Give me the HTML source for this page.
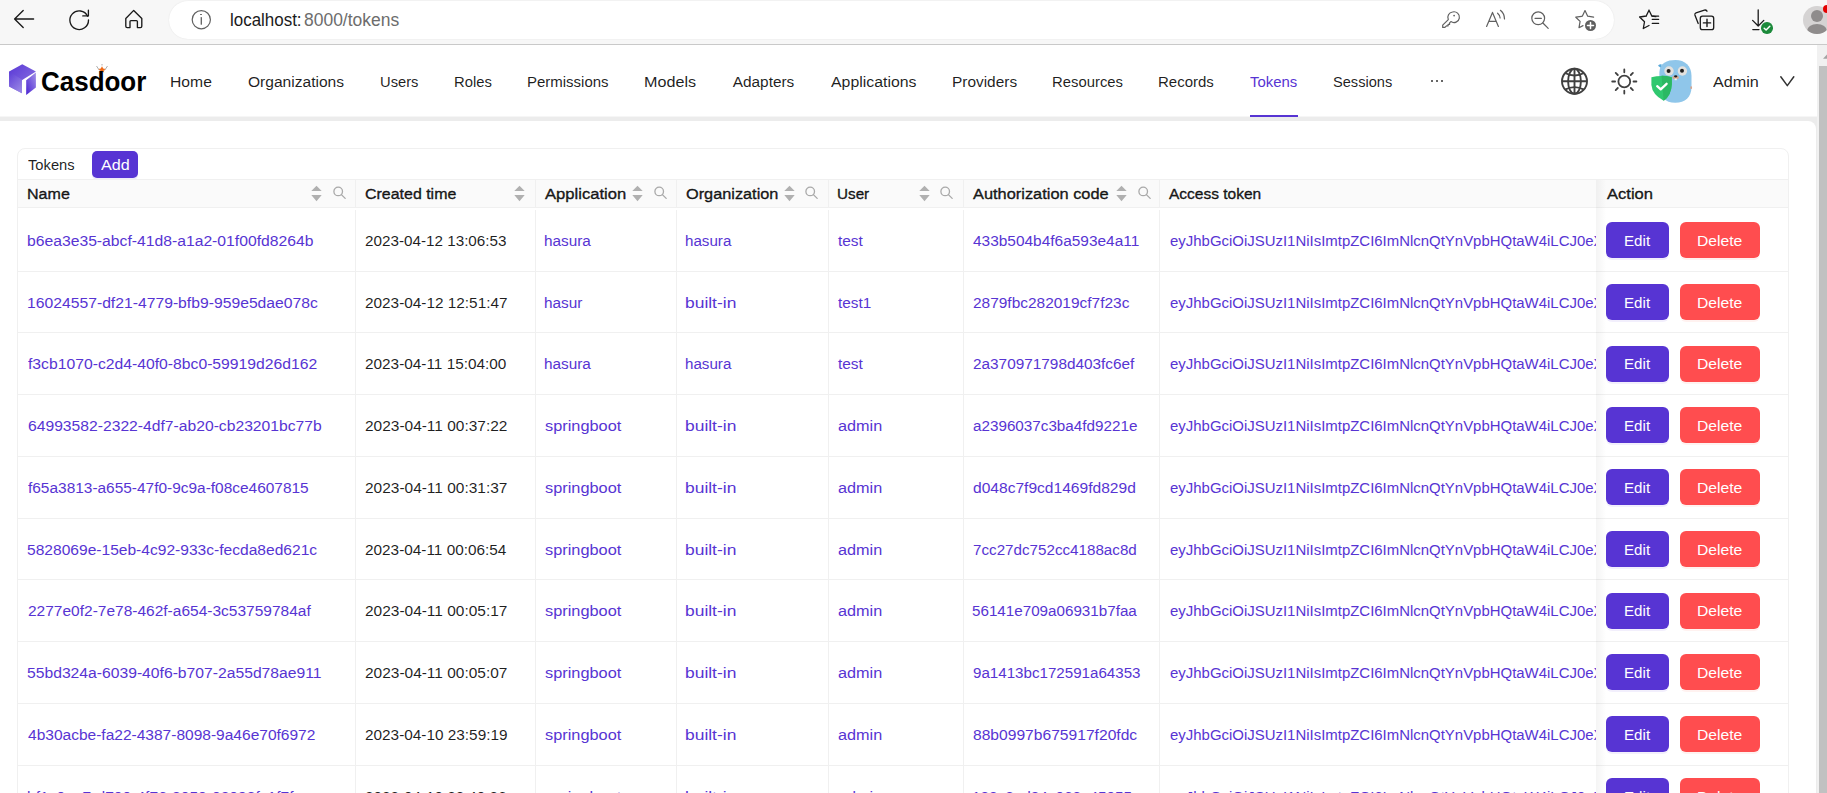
<!DOCTYPE html>
<html><head><meta charset="utf-8"><title>Tokens - Casdoor</title>
<style>
html,body{margin:0;padding:0;width:1827px;height:793px;overflow:hidden;background:#fff;font-family:"Liberation Sans", sans-serif}
.t{position:absolute;white-space:nowrap;line-height:20px;transform-origin:0 0}
</style></head><body>
<div style="position:absolute;left:0;top:0;width:1827px;height:44px;background:#f7f7f7"></div>
<div style="position:absolute;left:0;top:44px;width:1827px;height:1px;background:#c9c9c9"></div>
<div style="position:absolute;left:169px;top:1px;width:1445px;height:37.5px;border-radius:19px;background:#fff;box-shadow:0 0 1.5px rgba(0,0,0,0.10)"></div>
<svg style="position:absolute;left:0;top:0" width="240" height="44" viewBox="0 0 240 44" fill="none" stroke="#1a1a1a" stroke-width="1.35" stroke-linecap="round" stroke-linejoin="round">
<path d="M14.6 19 H33.6 M14.6 19 L23.2 10.4 M14.6 19 L23.2 27.6"/>
<path d="M87.6 16.2 A9.3 9.3 0 1 0 88.5 20"/>
<path d="M88.4 10.2 V15.9 H82.8"/>
<path d="M125.8 18.5 L133.7 10.4 L141.8 18.5 V26.2 Q141.8 27.6 140.4 27.6 H137.4 V21.6 Q137.4 20.6 136.4 20.6 H131 Q130 20.6 130 21.6 V27.6 H127.2 Q125.8 27.6 125.8 26.2 Z"/>
<circle cx="201.3" cy="19.7" r="9.1" stroke="#606060" stroke-width="1.2"/>
<path d="M201.3 17.6 V24.2" stroke="#606060" stroke-width="1.3"/>
</svg>
<div style="position:absolute;left:200.4px;top:13.6px;width:1.8px;height:1.8px;border-radius:50%;background:#606060"></div>
<svg style="position:absolute;left:1420px;top:0" width="407" height="44" viewBox="1420 0 407 44" fill="none" stroke="#606060" stroke-width="1.2" stroke-linecap="round" stroke-linejoin="round">
<path d="M1452.5 12 a5.4 5.4 0 1 1 -1.6 9.6 l-1.3 1.3 v1.4 h-1.5 v1.5 h-1.6 l-1.6 1.6 h-2.2 v-2.2 l5.6 -5.6 a5.4 5.4 0 0 1 4.2 -7.6 z"/>
<circle cx="1454.1" cy="15.6" r="0.9" fill="#606060" stroke="none"/>
<path d="M1486.6 26.4 L1492.5 12.4 L1498.4 26.4 M1488.7 21.4 H1496.3"/>
<path d="M1497.6 13.2 q2.4 2 2.5 4.8 M1500.4 10.3 q4 3.2 4.1 8.6"/>
<circle cx="1538.2" cy="18.3" r="6.4"/>
<path d="M1535 18.3 H1541.4 M1542.9 23 L1548.2 28.3"/>
<path d="M1585 10.6 l2.7 5.6 l5.9 0.9 M1581.6 16.3 l-5.8 0.9 l4.3 4.2 l-1.1 6.3 l4 -2.1 M1585 10.6 l-2.7 5.6"/>
</svg>
<div style="position:absolute;left:1585px;top:19.8px;width:11px;height:11px;border-radius:50%;background:#5f5f5f"></div>
<svg style="position:absolute;left:1585px;top:19.8px" width="11" height="11" viewBox="0 0 11 11" stroke="#fff" stroke-width="1.5" stroke-linecap="round"><path d="M5.5 2.5 V8.5 M2.5 5.5 H8.5"/></svg>
<svg style="position:absolute;left:1620px;top:0" width="207" height="44" viewBox="1620 0 207 44" fill="none" stroke="#1a1a1a" stroke-width="1.3" stroke-linecap="round" stroke-linejoin="round">
<path d="M1649 10.2 l2.8 5.8 l4 0.6 M1646.4 16 l-6.8 1 l4.9 4.8 l-1.2 6.7 l5.7 -3 M1649 10.2 l-2.8 5.8"/>
<path d="M1652.3 19.4 H1658.6 M1652.3 23.4 H1658.6 M1652.3 16.2 H1658.6"/>
<path d="M1698.2 23.5 L1694.9 15 Q1694.5 13.4 1696 12.8 L1704.4 10.1 Q1706 9.7 1707 11.2"/>
<rect x="1700.3" y="16.2" width="13.4" height="13.4" rx="2.2"/>
<path d="M1707 19.3 V26.5 M1703.4 22.9 H1710.6" stroke-width="1.4"/>
<path d="M1758.2 9.8 V26 M1752.6 20.4 L1758.2 26 L1763.8 20.4 M1752.8 29.6 H1759"/>
</svg>
<div style="position:absolute;left:1761.2px;top:22px;width:11.6px;height:11.6px;border-radius:50%;background:#1c8a3b"></div>
<svg style="position:absolute;left:1761.2px;top:22px" width="12" height="12" viewBox="0 0 12 12" fill="none" stroke="#fff" stroke-width="1.5" stroke-linecap="round" stroke-linejoin="round"><path d="M3.2 6.2 L5.1 8 L8.8 4.3"/></svg>
<div style="position:absolute;left:1803px;top:5.6px;width:28.4px;height:28.4px;border-radius:50%;background:#d5d3d3;overflow:hidden"><div style="position:absolute;left:7.8px;top:4.6px;width:12px;height:12px;border-radius:50%;background:#8f8c8c"></div><div style="position:absolute;left:4px;top:18px;width:20px;height:14px;border-radius:50%;background:#8f8c8c"></div></div>
<div style="position:absolute;left:1823px;top:5px;width:8px;height:8px;border-radius:50%;background:#e30000"></div>
<div style="position:absolute;left:0;top:45px;width:1817px;height:748px;background:#ececec"></div>
<div style="position:absolute;left:0;top:45px;width:1817px;height:71px;background:#fff"></div>
<div style="position:absolute;left:0;top:115.5px;width:1817px;height:1.5px;background:#f6f6f6"></div>
<div style="position:absolute;left:0;top:121px;width:1816px;height:700px;background:#fff;border-radius:0 8px 0 0"></div>
<div style="position:absolute;left:1817px;top:45px;width:10px;height:748px;background:#f1f1f1"></div>
<div style="position:absolute;left:1819px;top:66px;width:8px;height:727px;background:#c1c1c1"></div>
<svg style="position:absolute;left:1817px;top:45px" width="10" height="20" viewBox="0 0 10 20"><path d="M6 13.7 L10 9.6 L14 13.7 Z" fill="#a3a3a3"/></svg>
<svg style="position:absolute;left:0;top:55px" width="40" height="45" viewBox="0 55 40 45">
<defs>
<linearGradient id="gt" x1="0" y1="0" x2="1" y2="1"><stop offset="0" stop-color="#5a38d6"/><stop offset="1" stop-color="#8f79e2"/></linearGradient>
<linearGradient id="gl" x1="0" y1="0" x2="0.6" y2="1"><stop offset="0" stop-color="#5b3bd7"/><stop offset="1" stop-color="#9a88e4"/></linearGradient>
<linearGradient id="gr" x1="1" y1="0" x2="0" y2="1"><stop offset="0" stop-color="#a493e8"/><stop offset="1" stop-color="#4a23d2"/></linearGradient>
</defs>
<path d="M22.3 64.2 L35.9 71.4 L33.2 73.2 L24.6 78.6 L21.9 80.2 V93.2 L9.1 86.4 V71.6 Z" fill="url(#gt)"/>
<path d="M9.1 71.6 L21.9 79.6 V93.2 L9.1 86.4 Z" fill="url(#gl)" opacity="0.85"/>
<path d="M35.9 72.4 V87.6 L26.2 94.9 V80.2 Z" fill="url(#gr)"/>
</svg>
<svg style="position:absolute;left:94px;top:63px" width="16" height="10" viewBox="0 0 16 10"><path d="M2.5 3 L5.5 7.5 M13.5 3 L10.5 7.5 M8 1 V2.5" stroke="#9a9a9a" stroke-width="0.8" fill="none"/><path d="M8 3.2 L9.2 5.6 L11.6 5.9 L9.6 7.4 L10.2 9.6 L8 8.4 L5.8 9.6 L6.4 7.4 L4.4 5.9 L6.8 5.6 Z" fill="#f06a17"/></svg>
<div style="position:absolute;left:1430.6px;top:80px;width:2px;height:2px;background:#333;border-radius:1px"></div>
<div style="position:absolute;left:1435.6px;top:80px;width:2px;height:2px;background:#333;border-radius:1px"></div>
<div style="position:absolute;left:1440.6px;top:80px;width:2px;height:2px;background:#333;border-radius:1px"></div>
<div style="position:absolute;left:1250px;top:115px;width:47.5px;height:2px;background:#5734d3"></div>
<svg style="position:absolute;left:1555px;top:62px" width="40" height="40" viewBox="1555 62 40 40" fill="none" stroke="#404040" stroke-width="1.9">
<circle cx="1574.5" cy="81.3" r="12.5"/>
<ellipse cx="1574.5" cy="81.3" rx="6.4" ry="12.5"/>
<path d="M1574.5 68.8 V93.8 M1562 81.3 H1587"/>
<path d="M1565 73 Q1574.5 78 1584 73 M1565 89.6 Q1574.5 84.6 1584 89.6"/>
</svg>
<svg style="position:absolute;left:1605px;top:62px" width="40" height="40" viewBox="1605 62 40 40" fill="none" stroke="#404040" stroke-width="1.8" stroke-linecap="round">
<circle cx="1624.3" cy="81.5" r="5.9"/>
<path d="M1624.3 69.4 V72.3 M1624.3 90.7 V93.6 M1612.2 81.5 H1615.1 M1633.5 81.5 H1636.4 M1615.7 72.9 L1617.8 75 M1630.8 88 L1632.9 90.1 M1615.7 90.1 L1617.8 88 M1630.8 75 L1632.9 72.9"/>
</svg>
<svg style="position:absolute;left:1645px;top:55px" width="52" height="52" viewBox="1645 55 52 52">
<path d="M1659.4 72 C1659.8 63 1667 60 1675.5 60 C1685 60 1691.5 66 1691.5 76 L1691.5 87 C1691.5 97 1685 102.8 1675.3 102.8 C1665 102.8 1659.6 96.5 1659.3 88 Z" fill="#8fc6ea"/>
<path d="M1658 65.8 Q1659.2 63.6 1661.8 64.6 L1660.6 67.8 Z" fill="#5aa9da"/>
<circle cx="1669" cy="71" r="4.7" fill="#e3e1de"/>
<circle cx="1682.4" cy="71" r="4.7" fill="#e3e1de"/>
<circle cx="1668.6" cy="71" r="2" fill="#1e1e1e"/>
<circle cx="1682" cy="70.8" r="2" fill="#1e1e1e"/>
<ellipse cx="1675.7" cy="77.4" rx="3.2" ry="1.7" fill="#d8a58c"/>
<rect x="1674.6" y="78.4" width="2.2" height="1.8" fill="#f2efe9"/>
<ellipse cx="1675.7" cy="76.3" rx="1.7" ry="1.1" fill="#1e1e1e"/>
<ellipse cx="1691.2" cy="87.7" rx="0.9" ry="1.4" fill="#d8a58c"/>
<path d="M1651.4 77.2 Q1661.5 74.6 1671.8 77.2 V84 Q1671.4 95.5 1663.7 100.8 Q1652.2 94.5 1651.4 85 Z" fill="#30c86f"/>
<path d="M1661.5 75.6 Q1666.7 75.9 1671.8 77.2 V84 Q1671.4 95.5 1663.7 100.8 Z" fill="#2bb863"/>
<path d="M1657.2 86.2 L1660.7 89.4 L1666.6 83.8" fill="none" stroke="#fff" stroke-width="2.3" stroke-linecap="round" stroke-linejoin="round"/>
</svg>
<svg style="position:absolute;left:1778px;top:73px" width="18" height="15" viewBox="0 0 18 15" fill="none" stroke="#333" stroke-width="1.5" stroke-linecap="round" stroke-linejoin="round"><path d="M2.8 3.8 L9.3 12.6 L15.8 3.8"/></svg>
<div style="position:absolute;left:17px;top:148px;width:1772px;height:700px;border:1px solid #f0f0f0;border-radius:8px;box-sizing:border-box;background:#fff"></div>
<div style="position:absolute;left:92px;top:151px;width:46px;height:26.5px;border-radius:5px;background:#5734d3;box-shadow:0 2px 0 rgba(87,52,211,0.1)"></div>
<div style="position:absolute;left:18px;top:179px;width:1770px;height:28px;background:#fafafa"></div>
<div style="position:absolute;left:18px;top:179px;width:1770px;height:1px;background:#f0f0f0"></div>
<div style="position:absolute;left:18px;top:207px;width:1770px;height:1px;background:#f0f0f0"></div>
<div style="position:absolute;left:355px;top:180px;width:1px;height:27px;background:#f0f0f0"></div>
<div style="position:absolute;left:355px;top:210px;width:1px;height:600px;background:#f0f0f0"></div>
<div style="position:absolute;left:535px;top:180px;width:1px;height:27px;background:#f0f0f0"></div>
<div style="position:absolute;left:535px;top:210px;width:1px;height:600px;background:#f0f0f0"></div>
<div style="position:absolute;left:676px;top:180px;width:1px;height:27px;background:#f0f0f0"></div>
<div style="position:absolute;left:676px;top:210px;width:1px;height:600px;background:#f0f0f0"></div>
<div style="position:absolute;left:828px;top:180px;width:1px;height:27px;background:#f0f0f0"></div>
<div style="position:absolute;left:828px;top:210px;width:1px;height:600px;background:#f0f0f0"></div>
<div style="position:absolute;left:963px;top:180px;width:1px;height:27px;background:#f0f0f0"></div>
<div style="position:absolute;left:963px;top:210px;width:1px;height:600px;background:#f0f0f0"></div>
<div style="position:absolute;left:1159px;top:180px;width:1px;height:27px;background:#f0f0f0"></div>
<div style="position:absolute;left:1159px;top:210px;width:1px;height:600px;background:#f0f0f0"></div>
<svg style="position:absolute;left:310.90px;top:185px" width="11" height="17" viewBox="0 0 11 17"><path d="M0.3 6 L5.5 0.8 L10.7 6 Z M0.3 10 L5.5 16.2 L10.7 10 Z" fill="#b0b0b0"/></svg>
<svg style="position:absolute;left:513.50px;top:185px" width="11" height="17" viewBox="0 0 11 17"><path d="M0.3 6 L5.5 0.8 L10.7 6 Z M0.3 10 L5.5 16.2 L10.7 10 Z" fill="#b0b0b0"/></svg>
<svg style="position:absolute;left:632.20px;top:185px" width="11" height="17" viewBox="0 0 11 17"><path d="M0.3 6 L5.5 0.8 L10.7 6 Z M0.3 10 L5.5 16.2 L10.7 10 Z" fill="#b0b0b0"/></svg>
<svg style="position:absolute;left:784.20px;top:185px" width="11" height="17" viewBox="0 0 11 17"><path d="M0.3 6 L5.5 0.8 L10.7 6 Z M0.3 10 L5.5 16.2 L10.7 10 Z" fill="#b0b0b0"/></svg>
<svg style="position:absolute;left:919.10px;top:185px" width="11" height="17" viewBox="0 0 11 17"><path d="M0.3 6 L5.5 0.8 L10.7 6 Z M0.3 10 L5.5 16.2 L10.7 10 Z" fill="#b0b0b0"/></svg>
<svg style="position:absolute;left:1115.50px;top:185px" width="11" height="17" viewBox="0 0 11 17"><path d="M0.3 6 L5.5 0.8 L10.7 6 Z M0.3 10 L5.5 16.2 L10.7 10 Z" fill="#b0b0b0"/></svg>
<svg style="position:absolute;left:332.60px;top:186px" width="14" height="14" viewBox="0 0 14 14" fill="none" stroke="#a9a9a9" stroke-width="1.3" stroke-linecap="round"><circle cx="5.2" cy="5.4" r="4.3"/><path d="M8.4 8.6 L12.2 12.4"/></svg>
<svg style="position:absolute;left:653.70px;top:186px" width="14" height="14" viewBox="0 0 14 14" fill="none" stroke="#a9a9a9" stroke-width="1.3" stroke-linecap="round"><circle cx="5.2" cy="5.4" r="4.3"/><path d="M8.4 8.6 L12.2 12.4"/></svg>
<svg style="position:absolute;left:805.40px;top:186px" width="14" height="14" viewBox="0 0 14 14" fill="none" stroke="#a9a9a9" stroke-width="1.3" stroke-linecap="round"><circle cx="5.2" cy="5.4" r="4.3"/><path d="M8.4 8.6 L12.2 12.4"/></svg>
<svg style="position:absolute;left:940.00px;top:186px" width="14" height="14" viewBox="0 0 14 14" fill="none" stroke="#a9a9a9" stroke-width="1.3" stroke-linecap="round"><circle cx="5.2" cy="5.4" r="4.3"/><path d="M8.4 8.6 L12.2 12.4"/></svg>
<svg style="position:absolute;left:1137.80px;top:186px" width="14" height="14" viewBox="0 0 14 14" fill="none" stroke="#a9a9a9" stroke-width="1.3" stroke-linecap="round"><circle cx="5.2" cy="5.4" r="4.3"/><path d="M8.4 8.6 L12.2 12.4"/></svg>
<div style="position:absolute;left:18px;top:271px;width:1770px;height:1px;background:#f0f0f0"></div>
<div style="position:absolute;left:18px;top:332px;width:1770px;height:1px;background:#f0f0f0"></div>
<div style="position:absolute;left:18px;top:394px;width:1770px;height:1px;background:#f0f0f0"></div>
<div style="position:absolute;left:18px;top:456px;width:1770px;height:1px;background:#f0f0f0"></div>
<div style="position:absolute;left:18px;top:518px;width:1770px;height:1px;background:#f0f0f0"></div>
<div style="position:absolute;left:18px;top:579px;width:1770px;height:1px;background:#f0f0f0"></div>
<div style="position:absolute;left:18px;top:641px;width:1770px;height:1px;background:#f0f0f0"></div>
<div style="position:absolute;left:18px;top:703px;width:1770px;height:1px;background:#f0f0f0"></div>
<div style="position:absolute;left:18px;top:765px;width:1770px;height:1px;background:#f0f0f0"></div>
<div style="position:absolute;left:18px;top:826px;width:1770px;height:1px;background:#f0f0f0"></div>
<div style="position:absolute;left:1160px;top:216px;width:436px;height:40px;overflow:hidden"><span class="t" style="left:9.6px;top:14.66px;font-size:15.4px;color:#5734d3;transform:scaleX(0.971)">eyJhbGciOiJSUzI1NiIsImtpZCI6ImNlcnQtYnVpbHQtaW4iLCJ0eXAiOiJKV1QifQ</span></div>
<div style="position:absolute;left:1606px;top:222.00px;width:63px;height:36px;border-radius:6px;background:#5734d3;box-shadow:0 2px 0 rgba(87,52,211,0.08)"></div>
<div style="position:absolute;left:1680px;top:222.00px;width:80px;height:36px;border-radius:6px;background:#ff4d4f;box-shadow:0 2px 0 rgba(255,38,5,0.06)"></div>
<div style="position:absolute;left:1160px;top:278px;width:436px;height:40px;overflow:hidden"><span class="t" style="left:9.6px;top:14.66px;font-size:15.4px;color:#5734d3;transform:scaleX(0.971)">eyJhbGciOiJSUzI1NiIsImtpZCI6ImNlcnQtYnVpbHQtaW4iLCJ0eXAiOiJKV1QifQ</span></div>
<div style="position:absolute;left:1606px;top:283.75px;width:63px;height:36px;border-radius:6px;background:#5734d3;box-shadow:0 2px 0 rgba(87,52,211,0.08)"></div>
<div style="position:absolute;left:1680px;top:283.75px;width:80px;height:36px;border-radius:6px;background:#ff4d4f;box-shadow:0 2px 0 rgba(255,38,5,0.06)"></div>
<div style="position:absolute;left:1160px;top:339px;width:436px;height:40px;overflow:hidden"><span class="t" style="left:9.6px;top:14.66px;font-size:15.4px;color:#5734d3;transform:scaleX(0.971)">eyJhbGciOiJSUzI1NiIsImtpZCI6ImNlcnQtYnVpbHQtaW4iLCJ0eXAiOiJKV1QifQ</span></div>
<div style="position:absolute;left:1606px;top:345.50px;width:63px;height:36px;border-radius:6px;background:#5734d3;box-shadow:0 2px 0 rgba(87,52,211,0.08)"></div>
<div style="position:absolute;left:1680px;top:345.50px;width:80px;height:36px;border-radius:6px;background:#ff4d4f;box-shadow:0 2px 0 rgba(255,38,5,0.06)"></div>
<div style="position:absolute;left:1160px;top:401px;width:436px;height:40px;overflow:hidden"><span class="t" style="left:9.6px;top:14.66px;font-size:15.4px;color:#5734d3;transform:scaleX(0.971)">eyJhbGciOiJSUzI1NiIsImtpZCI6ImNlcnQtYnVpbHQtaW4iLCJ0eXAiOiJKV1QifQ</span></div>
<div style="position:absolute;left:1606px;top:407.25px;width:63px;height:36px;border-radius:6px;background:#5734d3;box-shadow:0 2px 0 rgba(87,52,211,0.08)"></div>
<div style="position:absolute;left:1680px;top:407.25px;width:80px;height:36px;border-radius:6px;background:#ff4d4f;box-shadow:0 2px 0 rgba(255,38,5,0.06)"></div>
<div style="position:absolute;left:1160px;top:463px;width:436px;height:40px;overflow:hidden"><span class="t" style="left:9.6px;top:14.66px;font-size:15.4px;color:#5734d3;transform:scaleX(0.971)">eyJhbGciOiJSUzI1NiIsImtpZCI6ImNlcnQtYnVpbHQtaW4iLCJ0eXAiOiJKV1QifQ</span></div>
<div style="position:absolute;left:1606px;top:469.00px;width:63px;height:36px;border-radius:6px;background:#5734d3;box-shadow:0 2px 0 rgba(87,52,211,0.08)"></div>
<div style="position:absolute;left:1680px;top:469.00px;width:80px;height:36px;border-radius:6px;background:#ff4d4f;box-shadow:0 2px 0 rgba(255,38,5,0.06)"></div>
<div style="position:absolute;left:1160px;top:525px;width:436px;height:40px;overflow:hidden"><span class="t" style="left:9.6px;top:14.66px;font-size:15.4px;color:#5734d3;transform:scaleX(0.971)">eyJhbGciOiJSUzI1NiIsImtpZCI6ImNlcnQtYnVpbHQtaW4iLCJ0eXAiOiJKV1QifQ</span></div>
<div style="position:absolute;left:1606px;top:530.75px;width:63px;height:36px;border-radius:6px;background:#5734d3;box-shadow:0 2px 0 rgba(87,52,211,0.08)"></div>
<div style="position:absolute;left:1680px;top:530.75px;width:80px;height:36px;border-radius:6px;background:#ff4d4f;box-shadow:0 2px 0 rgba(255,38,5,0.06)"></div>
<div style="position:absolute;left:1160px;top:586px;width:436px;height:40px;overflow:hidden"><span class="t" style="left:9.6px;top:14.66px;font-size:15.4px;color:#5734d3;transform:scaleX(0.971)">eyJhbGciOiJSUzI1NiIsImtpZCI6ImNlcnQtYnVpbHQtaW4iLCJ0eXAiOiJKV1QifQ</span></div>
<div style="position:absolute;left:1606px;top:592.50px;width:63px;height:36px;border-radius:6px;background:#5734d3;box-shadow:0 2px 0 rgba(87,52,211,0.08)"></div>
<div style="position:absolute;left:1680px;top:592.50px;width:80px;height:36px;border-radius:6px;background:#ff4d4f;box-shadow:0 2px 0 rgba(255,38,5,0.06)"></div>
<div style="position:absolute;left:1160px;top:648px;width:436px;height:40px;overflow:hidden"><span class="t" style="left:9.6px;top:14.66px;font-size:15.4px;color:#5734d3;transform:scaleX(0.971)">eyJhbGciOiJSUzI1NiIsImtpZCI6ImNlcnQtYnVpbHQtaW4iLCJ0eXAiOiJKV1QifQ</span></div>
<div style="position:absolute;left:1606px;top:654.25px;width:63px;height:36px;border-radius:6px;background:#5734d3;box-shadow:0 2px 0 rgba(87,52,211,0.08)"></div>
<div style="position:absolute;left:1680px;top:654.25px;width:80px;height:36px;border-radius:6px;background:#ff4d4f;box-shadow:0 2px 0 rgba(255,38,5,0.06)"></div>
<div style="position:absolute;left:1160px;top:710px;width:436px;height:40px;overflow:hidden"><span class="t" style="left:9.6px;top:14.66px;font-size:15.4px;color:#5734d3;transform:scaleX(0.971)">eyJhbGciOiJSUzI1NiIsImtpZCI6ImNlcnQtYnVpbHQtaW4iLCJ0eXAiOiJKV1QifQ</span></div>
<div style="position:absolute;left:1606px;top:716.00px;width:63px;height:36px;border-radius:6px;background:#5734d3;box-shadow:0 2px 0 rgba(87,52,211,0.08)"></div>
<div style="position:absolute;left:1680px;top:716.00px;width:80px;height:36px;border-radius:6px;background:#ff4d4f;box-shadow:0 2px 0 rgba(255,38,5,0.06)"></div>
<div style="position:absolute;left:1160px;top:772px;width:436px;height:40px;overflow:hidden"><span class="t" style="left:9.6px;top:14.66px;font-size:15.4px;color:#5734d3;transform:scaleX(0.971)">eyJhbGciOiJSUzI1NiIsImtpZCI6ImNlcnQtYnVpbHQtaW4iLCJ0eXAiOiJKV1QifQ</span></div>
<div style="position:absolute;left:1606px;top:777.75px;width:63px;height:36px;border-radius:6px;background:#5734d3;box-shadow:0 2px 0 rgba(87,52,211,0.08)"></div>
<div style="position:absolute;left:1680px;top:777.75px;width:80px;height:36px;border-radius:6px;background:#ff4d4f;box-shadow:0 2px 0 rgba(255,38,5,0.06)"></div>
<div style="position:absolute;left:1596px;top:180px;width:10px;height:640px;background:linear-gradient(90deg,rgba(5,5,5,0.045),rgba(5,5,5,0))"></div>
<span class="t" style="left:230.03px;top:9.94px;font-size:17.50px;font-weight:400;color:#1b1b1b;transform:scaleX(0.9681);">localhost:</span>
<span class="t" style="left:303.80px;top:9.94px;font-size:17.50px;font-weight:400;color:#6d6d6d;transform:scaleX(0.9979);">8000/tokens</span>
<span class="t" style="left:41.27px;top:72.30px;font-size:28.00px;font-weight:700;color:#000;transform:scaleX(0.9274);">Casdoor</span>
<span class="t" style="left:170.18px;top:71.66px;font-size:15.40px;font-weight:400;color:rgba(0,0,0,0.88);transform:scaleX(1.0200);">Home</span>
<span class="t" style="left:248.30px;top:71.66px;font-size:15.40px;font-weight:400;color:rgba(0,0,0,0.88);transform:scaleX(1.0116);">Organizations</span>
<span class="t" style="left:380.04px;top:71.66px;font-size:15.40px;font-weight:400;color:rgba(0,0,0,0.88);transform:scaleX(0.9564);">Users</span>
<span class="t" style="left:454.04px;top:71.66px;font-size:15.40px;font-weight:400;color:rgba(0,0,0,0.88);transform:scaleX(0.9632);">Roles</span>
<span class="t" style="left:527.03px;top:71.66px;font-size:15.40px;font-weight:400;color:rgba(0,0,0,0.88);transform:scaleX(0.9735);">Permissions</span>
<span class="t" style="left:643.95px;top:71.66px;font-size:15.40px;font-weight:400;color:rgba(0,0,0,0.88);transform:scaleX(1.0490);">Models</span>
<span class="t" style="left:732.70px;top:71.66px;font-size:15.40px;font-weight:400;color:rgba(0,0,0,0.88);">Adapters</span>
<span class="t" style="left:831.00px;top:71.66px;font-size:15.40px;font-weight:400;color:rgba(0,0,0,0.88);transform:scaleX(1.0301);">Applications</span>
<span class="t" style="left:951.70px;top:71.66px;font-size:15.40px;font-weight:400;color:rgba(0,0,0,0.88);transform:scaleX(1.0016);">Providers</span>
<span class="t" style="left:1052.03px;top:71.66px;font-size:15.40px;font-weight:400;color:rgba(0,0,0,0.88);transform:scaleX(0.9653);">Resources</span>
<span class="t" style="left:1158.03px;top:71.66px;font-size:15.40px;font-weight:400;color:rgba(0,0,0,0.88);transform:scaleX(0.9750);">Records</span>
<span class="t" style="left:1250.00px;top:71.66px;font-size:15.40px;font-weight:400;color:#5734d3;transform:scaleX(0.9694);">Tokens</span>
<span class="t" style="left:1332.75px;top:71.66px;font-size:15.40px;font-weight:400;color:rgba(0,0,0,0.88);transform:scaleX(0.9492);">Sessions</span>
<span class="t" style="left:1712.80px;top:71.66px;font-size:15.40px;font-weight:400;color:rgba(0,0,0,0.88);transform:scaleX(1.0512);">Admin</span>
<span class="t" style="left:27.60px;top:154.66px;font-size:15.40px;font-weight:400;color:rgba(0,0,0,0.88);transform:scaleX(0.9571);">Tokens</span>
<span class="t" style="left:101.00px;top:154.66px;font-size:15.40px;font-weight:400;color:#fff;transform:scaleX(1.0481);">Add</span>
<span class="t" style="left:26.56px;top:184.16px;font-size:15.40px;font-weight:400;-webkit-text-stroke:0.4px rgba(0,0,0,0.88);color:rgba(0,0,0,0.88);transform:scaleX(1.0425);">Name</span>
<span class="t" style="left:364.80px;top:184.16px;font-size:15.40px;font-weight:400;-webkit-text-stroke:0.4px rgba(0,0,0,0.88);color:rgba(0,0,0,0.88);transform:scaleX(1.0364);">Created time</span>
<span class="t" style="left:544.60px;top:184.16px;font-size:15.40px;font-weight:400;-webkit-text-stroke:0.4px rgba(0,0,0,0.88);color:rgba(0,0,0,0.88);transform:scaleX(1.0787);">Application</span>
<span class="t" style="left:686.20px;top:184.16px;font-size:15.40px;font-weight:400;-webkit-text-stroke:0.4px rgba(0,0,0,0.88);color:rgba(0,0,0,0.88);transform:scaleX(1.0586);">Organization</span>
<span class="t" style="left:837.01px;top:184.16px;font-size:15.40px;font-weight:400;-webkit-text-stroke:0.4px rgba(0,0,0,0.88);color:rgba(0,0,0,0.88);transform:scaleX(0.9906);">User</span>
<span class="t" style="left:973.40px;top:184.16px;font-size:15.40px;font-weight:400;-webkit-text-stroke:0.4px rgba(0,0,0,0.88);color:rgba(0,0,0,0.88);transform:scaleX(1.0641);">Authorization code</span>
<span class="t" style="left:1169.30px;top:184.16px;font-size:15.40px;font-weight:400;-webkit-text-stroke:0.4px rgba(0,0,0,0.88);color:rgba(0,0,0,0.88);transform:scaleX(1.0077);">Access token</span>
<span class="t" style="left:1606.80px;top:184.16px;font-size:15.40px;font-weight:400;-webkit-text-stroke:0.4px rgba(0,0,0,0.88);color:rgba(0,0,0,0.88);transform:scaleX(1.0762);">Action</span>
<span class="t" style="left:26.58px;top:230.66px;font-size:15.40px;font-weight:400;color:#5734d3;transform:scaleX(1.0204);">b6ea3e35-abcf-41d8-a1a2-01f00fd8264b</span>
<span class="t" style="left:364.80px;top:230.66px;font-size:15.40px;font-weight:400;color:rgba(0,0,0,0.88);transform:scaleX(0.9902);">2023-04-12 13:06:53</span>
<span class="t" style="left:543.60px;top:230.66px;font-size:15.40px;font-weight:400;color:#5734d3;transform:scaleX(0.9957);">hasura</span>
<span class="t" style="left:685.22px;top:230.66px;font-size:15.40px;font-weight:400;color:#5734d3;transform:scaleX(0.9848);">hasura</span>
<span class="t" style="left:838.00px;top:230.66px;font-size:15.40px;font-weight:400;color:#5734d3;">test</span>
<span class="t" style="left:973.40px;top:230.66px;font-size:15.40px;font-weight:400;color:#5734d3;transform:scaleX(1.0030);">433b504b4f6a593e4a11</span>
<span class="t" style="left:1624.02px;top:230.66px;font-size:15.40px;font-weight:400;color:#fff;transform:scaleX(0.9846);">Edit</span>
<span class="t" style="left:1697.38px;top:230.66px;font-size:15.40px;font-weight:400;color:#fff;transform:scaleX(1.0186);">Delete</span>
<span class="t" style="left:26.58px;top:292.66px;font-size:15.40px;font-weight:400;color:#5734d3;transform:scaleX(1.0208);">16024557-df21-4779-bfb9-959e5dae078c</span>
<span class="t" style="left:364.80px;top:292.66px;font-size:15.40px;font-weight:400;color:rgba(0,0,0,0.88);transform:scaleX(0.9972);">2023-04-12 12:51:47</span>
<span class="t" style="left:543.60px;top:292.66px;font-size:15.40px;font-weight:400;color:#5734d3;transform:scaleX(0.9974);">hasur</span>
<span class="t" style="left:685.07px;top:292.66px;font-size:15.40px;font-weight:400;color:#5734d3;transform:scaleX(1.1318);">built-in</span>
<span class="t" style="left:838.00px;top:292.66px;font-size:15.40px;font-weight:400;color:#5734d3;transform:scaleX(0.9939);">test1</span>
<span class="t" style="left:973.40px;top:292.66px;font-size:15.40px;font-weight:400;color:#5734d3;transform:scaleX(1.0039);">2879fbc282019cf7f23c</span>
<span class="t" style="left:1624.02px;top:292.66px;font-size:15.40px;font-weight:400;color:#fff;transform:scaleX(0.9846);">Edit</span>
<span class="t" style="left:1697.38px;top:292.66px;font-size:15.40px;font-weight:400;color:#fff;transform:scaleX(1.0186);">Delete</span>
<span class="t" style="left:27.60px;top:353.66px;font-size:15.40px;font-weight:400;color:#5734d3;transform:scaleX(1.0212);">f3cb1070-c2d4-40f0-8bc0-59919d26d162</span>
<span class="t" style="left:364.80px;top:353.66px;font-size:15.40px;font-weight:400;color:rgba(0,0,0,0.88);transform:scaleX(0.9972);">2023-04-11 15:04:00</span>
<span class="t" style="left:543.60px;top:353.66px;font-size:15.40px;font-weight:400;color:#5734d3;transform:scaleX(0.9957);">hasura</span>
<span class="t" style="left:685.22px;top:353.66px;font-size:15.40px;font-weight:400;color:#5734d3;transform:scaleX(0.9848);">hasura</span>
<span class="t" style="left:838.00px;top:353.66px;font-size:15.40px;font-weight:400;color:#5734d3;">test</span>
<span class="t" style="left:973.40px;top:353.66px;font-size:15.40px;font-weight:400;color:#5734d3;transform:scaleX(0.9975);">2a370971798d403fc6ef</span>
<span class="t" style="left:1624.02px;top:353.66px;font-size:15.40px;font-weight:400;color:#fff;transform:scaleX(0.9846);">Edit</span>
<span class="t" style="left:1697.38px;top:353.66px;font-size:15.40px;font-weight:400;color:#fff;transform:scaleX(1.0186);">Delete</span>
<span class="t" style="left:27.60px;top:415.66px;font-size:15.40px;font-weight:400;color:#5734d3;transform:scaleX(1.0184);">64993582-2322-4df7-ab20-cb23201bc77b</span>
<span class="t" style="left:364.80px;top:415.66px;font-size:15.40px;font-weight:400;color:rgba(0,0,0,0.88);transform:scaleX(1.0043);">2023-04-11 00:37:22</span>
<span class="t" style="left:544.60px;top:415.66px;font-size:15.40px;font-weight:400;color:#5734d3;transform:scaleX(1.0611);">springboot</span>
<span class="t" style="left:685.07px;top:415.66px;font-size:15.40px;font-weight:400;color:#5734d3;transform:scaleX(1.1318);">built-in</span>
<span class="t" style="left:838.00px;top:415.66px;font-size:15.40px;font-weight:400;color:#5734d3;transform:scaleX(1.0537);">admin</span>
<span class="t" style="left:973.40px;top:415.66px;font-size:15.40px;font-weight:400;color:#5734d3;transform:scaleX(0.9898);">a2396037c3ba4fd9221e</span>
<span class="t" style="left:1624.02px;top:415.66px;font-size:15.40px;font-weight:400;color:#fff;transform:scaleX(0.9846);">Edit</span>
<span class="t" style="left:1697.38px;top:415.66px;font-size:15.40px;font-weight:400;color:#fff;transform:scaleX(1.0186);">Delete</span>
<span class="t" style="left:27.60px;top:477.66px;font-size:15.40px;font-weight:400;color:#5734d3;transform:scaleX(1.0029);">f65a3813-a655-47f0-9c9a-f08ce4607815</span>
<span class="t" style="left:364.80px;top:477.66px;font-size:15.40px;font-weight:400;color:rgba(0,0,0,0.88);transform:scaleX(1.0043);">2023-04-11 00:31:37</span>
<span class="t" style="left:544.60px;top:477.66px;font-size:15.40px;font-weight:400;color:#5734d3;transform:scaleX(1.0611);">springboot</span>
<span class="t" style="left:685.07px;top:477.66px;font-size:15.40px;font-weight:400;color:#5734d3;transform:scaleX(1.1318);">built-in</span>
<span class="t" style="left:838.00px;top:477.66px;font-size:15.40px;font-weight:400;color:#5734d3;transform:scaleX(1.0537);">admin</span>
<span class="t" style="left:973.40px;top:477.66px;font-size:15.40px;font-weight:400;color:#5734d3;transform:scaleX(1.0119);">d048c7f9cd1469fd829d</span>
<span class="t" style="left:1624.02px;top:477.66px;font-size:15.40px;font-weight:400;color:#fff;transform:scaleX(0.9846);">Edit</span>
<span class="t" style="left:1697.38px;top:477.66px;font-size:15.40px;font-weight:400;color:#fff;transform:scaleX(1.0186);">Delete</span>
<span class="t" style="left:26.59px;top:539.66px;font-size:15.40px;font-weight:400;color:#5734d3;transform:scaleX(1.0119);">5828069e-15eb-4c92-933c-fecda8ed621c</span>
<span class="t" style="left:364.80px;top:539.66px;font-size:15.40px;font-weight:400;color:rgba(0,0,0,0.88);transform:scaleX(0.9972);">2023-04-11 00:06:54</span>
<span class="t" style="left:544.60px;top:539.66px;font-size:15.40px;font-weight:400;color:#5734d3;transform:scaleX(1.0611);">springboot</span>
<span class="t" style="left:685.07px;top:539.66px;font-size:15.40px;font-weight:400;color:#5734d3;transform:scaleX(1.1318);">built-in</span>
<span class="t" style="left:838.00px;top:539.66px;font-size:15.40px;font-weight:400;color:#5734d3;transform:scaleX(1.0537);">admin</span>
<span class="t" style="left:973.40px;top:539.66px;font-size:15.40px;font-weight:400;color:#5734d3;transform:scaleX(0.9867);">7cc27dc752cc4188ac8d</span>
<span class="t" style="left:1624.02px;top:539.66px;font-size:15.40px;font-weight:400;color:#fff;transform:scaleX(0.9846);">Edit</span>
<span class="t" style="left:1697.38px;top:539.66px;font-size:15.40px;font-weight:400;color:#fff;transform:scaleX(1.0186);">Delete</span>
<span class="t" style="left:27.60px;top:600.66px;font-size:15.40px;font-weight:400;color:#5734d3;transform:scaleX(1.0071);">2277e0f2-7e78-462f-a654-3c53759784af</span>
<span class="t" style="left:364.80px;top:600.66px;font-size:15.40px;font-weight:400;color:rgba(0,0,0,0.88);transform:scaleX(1.0043);">2023-04-11 00:05:17</span>
<span class="t" style="left:544.60px;top:600.66px;font-size:15.40px;font-weight:400;color:#5734d3;transform:scaleX(1.0611);">springboot</span>
<span class="t" style="left:685.07px;top:600.66px;font-size:15.40px;font-weight:400;color:#5734d3;transform:scaleX(1.1318);">built-in</span>
<span class="t" style="left:838.00px;top:600.66px;font-size:15.40px;font-weight:400;color:#5734d3;transform:scaleX(1.0537);">admin</span>
<span class="t" style="left:972.41px;top:600.66px;font-size:15.40px;font-weight:400;color:#5734d3;transform:scaleX(0.9873);">56141e709a06931b7faa</span>
<span class="t" style="left:1624.02px;top:600.66px;font-size:15.40px;font-weight:400;color:#fff;transform:scaleX(0.9846);">Edit</span>
<span class="t" style="left:1697.38px;top:600.66px;font-size:15.40px;font-weight:400;color:#fff;transform:scaleX(1.0186);">Delete</span>
<span class="t" style="left:26.58px;top:662.66px;font-size:15.40px;font-weight:400;color:#5734d3;transform:scaleX(1.0191);">55bd324a-6039-40f6-b707-2a55d78ae911</span>
<span class="t" style="left:364.80px;top:662.66px;font-size:15.40px;font-weight:400;color:rgba(0,0,0,0.88);transform:scaleX(1.0043);">2023-04-11 00:05:07</span>
<span class="t" style="left:544.60px;top:662.66px;font-size:15.40px;font-weight:400;color:#5734d3;transform:scaleX(1.0611);">springboot</span>
<span class="t" style="left:685.07px;top:662.66px;font-size:15.40px;font-weight:400;color:#5734d3;transform:scaleX(1.1318);">built-in</span>
<span class="t" style="left:838.00px;top:662.66px;font-size:15.40px;font-weight:400;color:#5734d3;transform:scaleX(1.0537);">admin</span>
<span class="t" style="left:973.40px;top:662.66px;font-size:15.40px;font-weight:400;color:#5734d3;transform:scaleX(0.9835);">9a1413bc172591a64353</span>
<span class="t" style="left:1624.02px;top:662.66px;font-size:15.40px;font-weight:400;color:#fff;transform:scaleX(0.9846);">Edit</span>
<span class="t" style="left:1697.38px;top:662.66px;font-size:15.40px;font-weight:400;color:#fff;transform:scaleX(1.0186);">Delete</span>
<span class="t" style="left:27.60px;top:724.66px;font-size:15.40px;font-weight:400;color:#5734d3;transform:scaleX(1.0084);">4b30acbe-fa22-4387-8098-9a46e70f6972</span>
<span class="t" style="left:364.80px;top:724.66px;font-size:15.40px;font-weight:400;color:rgba(0,0,0,0.88);transform:scaleX(0.9972);">2023-04-10 23:59:19</span>
<span class="t" style="left:544.60px;top:724.66px;font-size:15.40px;font-weight:400;color:#5734d3;transform:scaleX(1.0611);">springboot</span>
<span class="t" style="left:685.07px;top:724.66px;font-size:15.40px;font-weight:400;color:#5734d3;transform:scaleX(1.1318);">built-in</span>
<span class="t" style="left:838.00px;top:724.66px;font-size:15.40px;font-weight:400;color:#5734d3;transform:scaleX(1.0537);">admin</span>
<span class="t" style="left:973.40px;top:724.66px;font-size:15.40px;font-weight:400;color:#5734d3;transform:scaleX(1.0149);">88b0997b675917f20fdc</span>
<span class="t" style="left:1624.02px;top:724.66px;font-size:15.40px;font-weight:400;color:#fff;transform:scaleX(0.9846);">Edit</span>
<span class="t" style="left:1697.38px;top:724.66px;font-size:15.40px;font-weight:400;color:#fff;transform:scaleX(1.0186);">Delete</span>
<span class="t" style="left:26.59px;top:786.66px;font-size:15.40px;font-weight:400;color:#5734d3;transform:scaleX(1.0150);">bf1c0ea7-d700-4f76-8050-02093fc1f7fa</span>
<span class="t" style="left:364.80px;top:786.66px;font-size:15.40px;font-weight:400;color:rgba(0,0,0,0.88);transform:scaleX(0.9902);">2023-04-10 23:40:36</span>
<span class="t" style="left:544.60px;top:786.66px;font-size:15.40px;font-weight:400;color:#5734d3;transform:scaleX(1.0611);">springboot</span>
<span class="t" style="left:685.07px;top:786.66px;font-size:15.40px;font-weight:400;color:#5734d3;transform:scaleX(1.1318);">built-in</span>
<span class="t" style="left:838.00px;top:786.66px;font-size:15.40px;font-weight:400;color:#5734d3;transform:scaleX(1.0537);">admin</span>
<span class="t" style="left:972.40px;top:786.66px;font-size:15.40px;font-weight:400;color:#5734d3;transform:scaleX(0.9950);">183c3ed84c063a45055c</span>
<span class="t" style="left:1624.02px;top:786.66px;font-size:15.40px;font-weight:400;color:#fff;transform:scaleX(0.9846);">Edit</span>
<span class="t" style="left:1697.38px;top:786.66px;font-size:15.40px;font-weight:400;color:#fff;transform:scaleX(1.0186);">Delete</span>
</body></html>
